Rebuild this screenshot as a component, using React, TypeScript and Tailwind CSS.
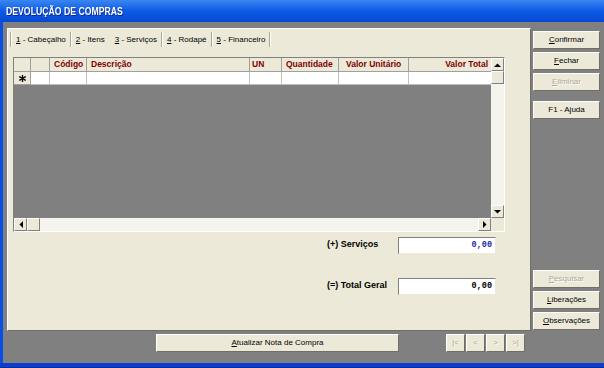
import React from "react";

const F = { fontFamily: '"Liberation Sans", Arial, sans-serif' };

function Btn({
  children,
  disabled,
  className,
}: {
  children: React.ReactNode;
  disabled?: boolean;
  className?: string;
}) {
  return (
    <div
      className={
        "flex items-center justify-center bg-[#ECE9D8] border border-t-white border-l-white border-r-[#716f64] border-b-[#716f64] text-[8px] font-normal leading-none " +
        (disabled ? "text-[#aca899] [text-shadow:1px_1px_0_#ffffff] " : "text-black ") +
        (className || "")
      }
    >
      {children}
    </div>
  );
}

function Arrow({ dir }: { dir: "up" | "down" | "left" | "right" }) {
  const pts =
    dir === "up"
      ? "0,4 3.5,0.5 7,4"
      : dir === "down"
      ? "0,0 7,0 3.5,3.5"
      : dir === "left"
      ? "4,0 4,7 0.5,3.5"
      : "0,0 0,7 3.5,3.5";
  const w = dir === "up" || dir === "down" ? 7 : 4;
  const h = dir === "up" || dir === "down" ? 4 : 7;
  return (
    <svg width={w} height={h} viewBox={`0 0 ${w} ${h}`}>
      <polygon points={pts} fill="#000" />
    </svg>
  );
}

function SBtn({ children, className }: { children?: React.ReactNode; className?: string }) {
  return (
    <div
      className={
        "flex items-center justify-center bg-[#ECE9D8] border border-t-white border-l-white border-r-[#808080] border-b-[#808080] " +
        (className || "")
      }
    >
      {children}
    </div>
  );
}

function Sep() {
  return <div className="w-[2px] h-[15px] border-l border-l-[#aca899] border-r border-r-white" />;
}

function Tab({ n, label }: { n: string; label: string }) {
  return (
    <div className="px-[4px] text-[8px] leading-none text-black whitespace-nowrap">
      <span className="underline">{n}</span> - {label}
    </div>
  );
}

export default function App() {
  return (
    <div className="w-[604px] h-[368px] flex flex-col bg-[#808080] overflow-hidden" style={F}>
      {/* Title bar */}
      <div className="h-[22px] flex items-center pl-[6px] bg-gradient-to-b from-[#3a86f2] via-[#0b5ae6] to-[#0848d2]">
        <span className="text-white font-bold text-[11px] leading-none origin-left scale-x-[0.79] inline-block whitespace-nowrap [text-shadow:1px_1px_0_#0a2a8a]">
          DEVOLUÇÃO DE COMPRAS
        </span>
      </div>

      <div className="flex-1 flex">
        <div className="w-[3px] bg-[#0b4fe2]" />
        <div className="flex-1 flex flex-col pl-[4px] pt-[6px]">
          <div className="flex">
            {/* Main panel */}
            <div className="w-[524px] h-[303px] bg-[#ECE9D8] border border-t-white border-l-white border-r-[#716f64] border-b-[#716f64] flex flex-col">
              {/* Tabs */}
              <div className="flex items-center h-[15px] mt-[3px] ml-[2px]">
                <Sep />
                <Tab n="1" label="Cabeçalho" />
                <Sep />
                <Tab n="2" label="Itens" />
                <div className="w-[2px]" />
                <Tab n="3" label="Serviços" />
                <Sep />
                <Tab n="4" label="Rodapé" />
                <Sep />
                <Tab n="5" label="Financeiro" />
                <Sep />
              </div>

              {/* Grid */}
              <div className="ml-[5px] mt-[10px] w-[492px] h-[175px] border border-t-[#808080] border-l-[#808080] border-r-white border-b-white flex flex-col">
                <div className="flex h-[160px]">
                  <div className="flex-1 flex flex-col bg-[#808080]">
                    {/* header */}
                    <div className="flex h-[14px] bg-[#ECE9D8] text-[8.5px] font-bold text-[#800000] leading-none">
                      <div className="w-[17px] border-r border-b border-[#a0a0a0]" />
                      <div className="w-[19px] border-r border-b border-[#a0a0a0]" />
                      <div className="w-[37px] border-r border-b border-[#a0a0a0] flex items-center pl-[4px]">Código</div>
                      <div className="w-[163px] border-r border-b border-[#a0a0a0] flex items-center pl-[4px]">Descrição</div>
                      <div className="w-[32px] border-r border-b border-[#a0a0a0] flex items-center pl-[2px]">UN</div>
                      <div className="w-[57px] border-r border-b border-[#a0a0a0] flex items-center pl-[4px]">Quantidade</div>
                      <div className="w-[70px] border-r border-b border-[#a0a0a0] flex items-center pl-[7px]">Valor Unitário</div>
                      <div className="flex-1 border-b border-[#a0a0a0] flex items-center justify-end pr-[3px]">Valor Total</div>
                    </div>
                    {/* new row */}
                    <div className="flex h-[13px] bg-white">
                      <div className="w-[17px] bg-[#ECE9D8] border-r border-b border-[#a0a0a0] flex items-center justify-center">
                        <svg width="7" height="7" viewBox="0 0 7 7">
                          <path d="M3.5 0V7M0.3 1.6L6.7 5.4M0.3 5.4L6.7 1.6" stroke="#000" strokeWidth="1.3" />
                        </svg>
                      </div>
                      <div className="w-[19px] border-r border-b border-[#c0c0c0]" />
                      <div className="w-[37px] border-r border-b border-[#c0c0c0]" />
                      <div className="w-[163px] border-r border-b border-[#c0c0c0]" />
                      <div className="w-[32px] border-r border-b border-[#c0c0c0]" />
                      <div className="w-[57px] border-r border-b border-[#c0c0c0]" />
                      <div className="w-[70px] border-r border-b border-[#c0c0c0]" />
                      <div className="flex-1 border-b border-[#c0c0c0]" />
                    </div>
                  </div>
                  {/* vertical scrollbar */}
                  <div className="w-[13px] flex flex-col bg-[#f4f3ee]">
                    <SBtn className="h-[13px]">
                      <Arrow dir="up" />
                    </SBtn>
                    <SBtn className="h-[13px]" />
                    <div className="flex-1" />
                    <SBtn className="h-[13px]">
                      <Arrow dir="down" />
                    </SBtn>
                  </div>
                </div>
                {/* horizontal scrollbar */}
                <div className="flex h-[13px]">
                  <div className="flex-1 flex bg-[#f4f3ee]">
                    <SBtn className="w-[13px]">
                      <Arrow dir="left" />
                    </SBtn>
                    <SBtn className="w-[13px]" />
                    <div className="flex-1" />
                    <SBtn className="w-[13px]">
                      <Arrow dir="right" />
                    </SBtn>
                  </div>
                  <div className="w-[13px] bg-[#ECE9D8]" />
                </div>
              </div>

              {/* Totals */}
              <div className="ml-[319px] mt-[5px] flex items-start">
                <div className="w-[71px] pt-[3px] text-[9px] font-bold leading-none text-black">(+) Serviços</div>
                <div className="w-[98px] h-[17px] bg-white border border-t-[#808080] border-l-[#808080] border-r-[#ECE9D8] border-b-[#ECE9D8] flex items-center justify-end pr-[3px]">
                  <span
                    className="text-[8.5px] font-bold text-[#1c2aa8] leading-none"
                    style={{ fontFamily: '"Liberation Mono", "Courier New", monospace' }}
                  >
                    0,00
                  </span>
                </div>
              </div>
              <div className="ml-[319px] mt-[24px] flex items-start">
                <div className="w-[71px] pt-[3px] text-[9px] font-bold leading-none text-black">(=) Total Geral</div>
                <div className="w-[98px] h-[17px] bg-white border border-t-[#808080] border-l-[#808080] border-r-[#ECE9D8] border-b-[#ECE9D8] flex items-center justify-end pr-[3px]">
                  <span
                    className="text-[8.5px] font-bold text-black leading-none"
                    style={{ fontFamily: '"Liberation Mono", "Courier New", monospace' }}
                  >
                    0,00
                  </span>
                </div>
              </div>
            </div>

            {/* Right buttons */}
            <div className="ml-[2px] w-[67px] h-[303px] flex flex-col pt-[3px] pb-[1px]">
              <Btn className="h-[18px]">
                <span className="underline">C</span>onfirmar
              </Btn>
              <Btn className="h-[18px] mt-[3px]">
                <span className="underline">F</span>echar
              </Btn>
              <Btn className="h-[18px] mt-[3px]" disabled>
                <span className="underline">E</span>liminar
              </Btn>
              <Btn className="h-[18px] mt-[10px]">F1 - Ajuda</Btn>
              <div className="flex-1" />
              <Btn className="h-[18px]" disabled>
                <span className="underline">P</span>esquisar
              </Btn>
              <Btn className="h-[18px] mt-[3px]">
                <span className="underline">L</span>iberações
              </Btn>
              <Btn className="h-[18px] mt-[3px]">
                <span className="underline">O</span>bservações
              </Btn>
            </div>
          </div>

          {/* Bottom row */}
          <div className="flex mt-[3px] h-[18px]">
            <Btn className="ml-[149px] w-[243px]">
              <span className="underline">A</span>tualizar Nota de Compra
            </Btn>
            <div className="ml-[47px] flex gap-[1px]">
              <Btn className="w-[19px]" disabled>|&lt;</Btn>
              <Btn className="w-[19px]" disabled>&lt;</Btn>
              <Btn className="w-[19px]" disabled>&gt;</Btn>
              <Btn className="w-[19px]" disabled>&gt;|</Btn>
            </div>
          </div>
        </div>
      </div>

      <div className="h-[5px] bg-[#0a3fd2] border-b border-b-[#08289a]" />
    </div>
  );
}
